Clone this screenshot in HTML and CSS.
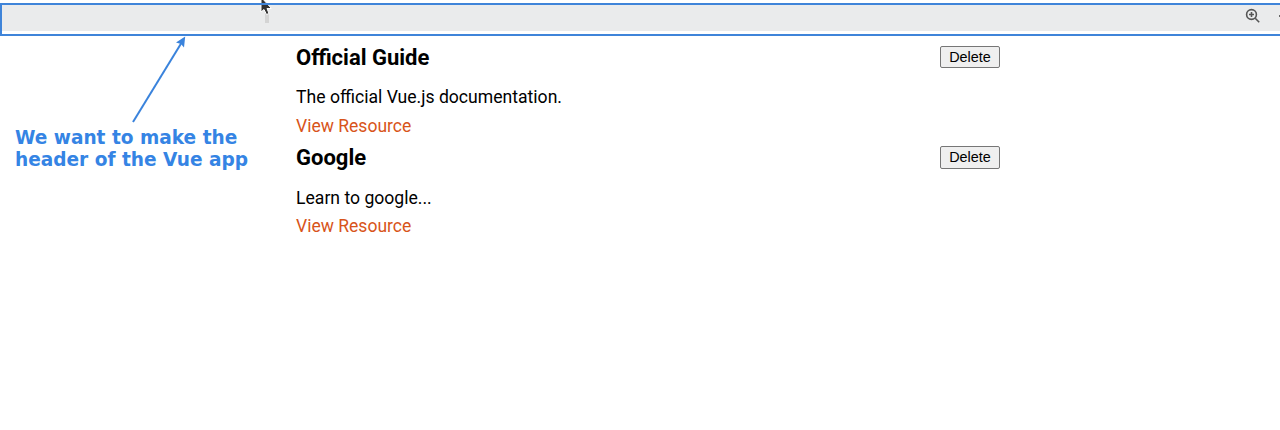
FILE: index.html
```html
<!DOCTYPE html>
<html lang="en">
<head>
<meta charset="utf-8">
<title>Resources</title>
<link rel="stylesheet" href="styles.css">
</head>
<body>
<header class="bar">
  <svg class="zoom-icon" viewBox="0 0 16 16" width="16" height="16"><circle cx="6.500" cy="6.500" r="4.900"/><path d="M10.200 10.200l4 4M4 6.500h5M6.500 4v5"/></svg>
  <span class="edge-icon"></span>
</header>
<main class="list">
  <article class="item">
    <div class="row"><h3 class="title">Official Guide</h3><button class="delete">Delete</button></div>
    <p class="text">The official Vue.js documentation.</p>
    <a class="link">View Resource</a>
  </article>
  <article class="item item-second">
    <div class="row"><h3 class="title">Google</h3><button class="delete">Delete</button></div>
    <p class="text">Learn to google...</p>
    <a class="link">View Resource</a>
  </article>
</main>
<svg class="arrow" width="80" height="100" viewBox="120 30 80 100"><path class="shaft" d="M133 122L182 42"/><path class="head" d="M185.200 36.500L184 47.500L181 44L176 42.500Z"/></svg>
<p class="note">We want to make the<br>header of the Vue app</p>
<svg class="cursor" width="20" height="26" viewBox="255 0 20 26"><path class="ghost" d="M267 11v12"/><path class="pointer" d="M261 -3V12L264 9.500L266.500 14.500L269 13.500L267 8.500H271.500Z"/><path class="outline" d="M255 4H275"/></svg>
</body>
</html>
```

FILE: styles.css
```css
body { margin: 0; height: 430px; overflow: hidden; position: relative; background: #fff; color: #000; font-family: Roboto, sans-serif; }
.bar { box-sizing: border-box; height: 33px; margin-top: 3px; border: 2px solid #3f84d9; border-right: 0; background: linear-gradient(#eaebec 26px, #fff 26px) padding-box; display: flex; justify-content: flex-end; padding-top: 3px; }
.zoom-icon { fill: none; stroke: #555; stroke-width: 1.6; }
.edge-icon { width: 1px; height: 2px; margin: 7px 0 0 18px; background: #666; }
.list { width: 704px; margin-left: 296px; padding-top: 10px; }
.item { height: 100px; }
.row { display: flex; justify-content: space-between; height: 23px; }
.title { margin: 0; font-size: 22px; line-height: 23px; }
.delete { width: 60px; height: 22px; padding: 0; border: 1px solid #767676; border-radius: 2px; background: #efefef; color: #000; font: 14.4px/20px "Liberation Sans", Arial, sans-serif; }
.text { margin: 17px 0 0; font-size: 17.6px; line-height: 22px; }
.link { display: block; margin-top: 7px; font-size: 17.55px; line-height: 22px; color: #d8541a; }
.item-second .delete { height: 23px; line-height: 19px; }
.item-second .text { margin-top: 18px; }
.item-second .link { margin-top: 6px; }
.note { position: absolute; left: 15px; top: 127px; margin: 0; color: #3584e4; font: bold 18.55px/22px "DejaVu Sans", sans-serif; white-space: nowrap; }
.arrow { position: absolute; left: 120px; top: 30px; }
.shaft { stroke: #3a83dc; stroke-width: 2; }
.head { fill: #3a83dc; }
.cursor { position: absolute; left: 255px; top: 0; }
.ghost { stroke: #d4d4d4; stroke-width: 4; }
.pointer { fill: #333; stroke: #fff; stroke-width: 1; }
.outline { stroke: #3f84d9; stroke-width: 2; }
```
